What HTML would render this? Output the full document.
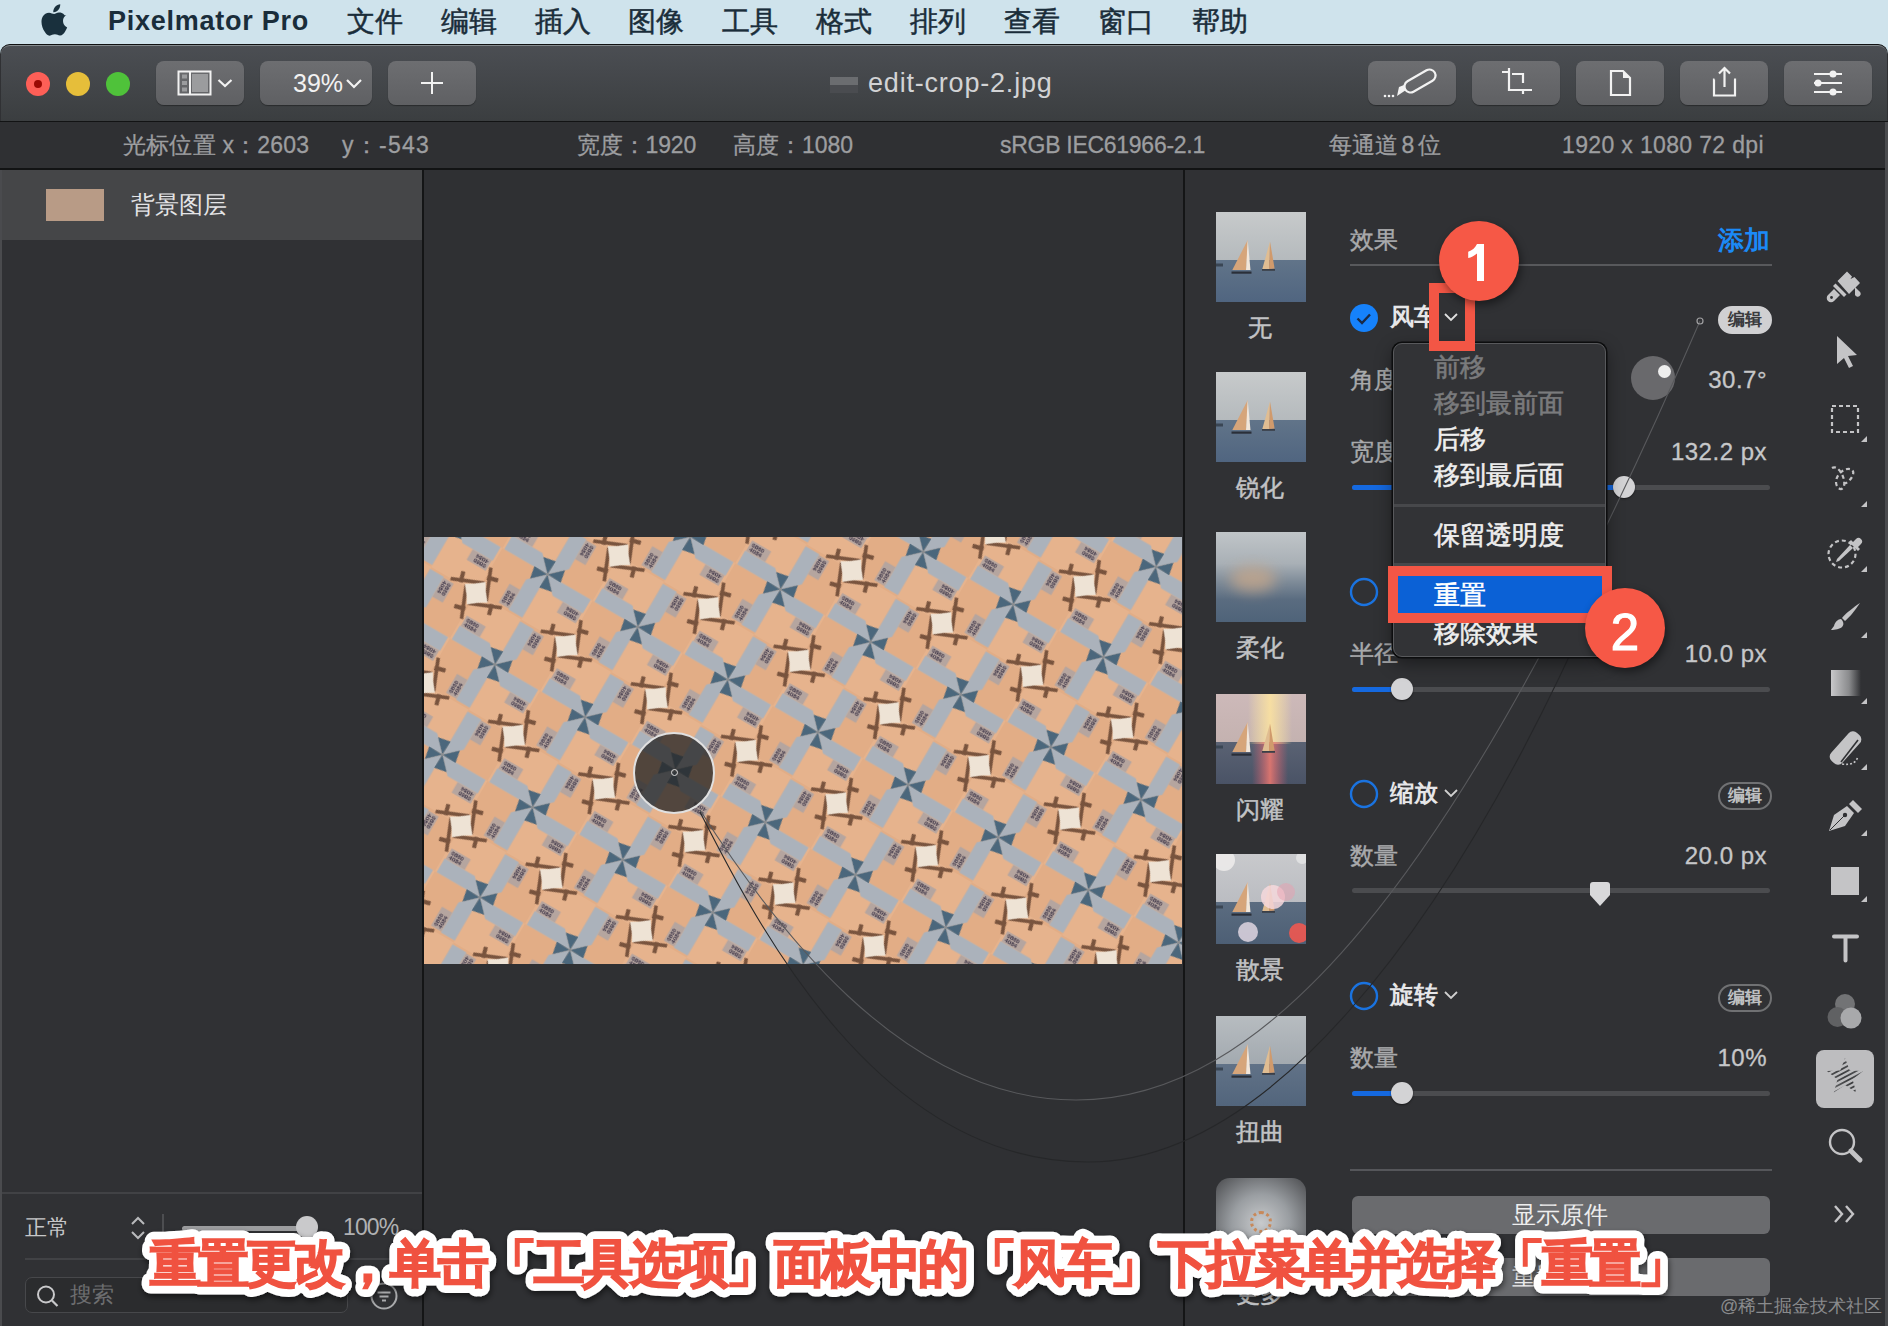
<!DOCTYPE html>
<html><head><meta charset="utf-8">
<style>
*{box-sizing:border-box;margin:0;padding:0}
html,body{width:1888px;height:1326px;overflow:hidden;background:#cfe3ec;font-family:"Liberation Sans",sans-serif}
.a{position:absolute}
.t{position:absolute;white-space:nowrap;line-height:1}
#menubar{left:0;top:0;width:1888px;height:44px;background:#cfe3ec}
#menubar .t{color:#1a2d3a;font-size:28px;top:8px;-webkit-text-stroke:0.5px #1a2d3a}
.btn{position:absolute;top:61px;height:44px;border-radius:8px;background:linear-gradient(#6d6e71,#5f6063);box-shadow:0 1px 1px rgba(0,0,0,.35)}
.info{color:#9d9ea0;font-size:23px;top:134px;-webkit-text-stroke:0.3px #9d9ea0;letter-spacing:0.6px}
.lbl{color:#a9aaac;font-size:24px;-webkit-text-stroke:0.4px #a9aaac}
.val{color:#c6c7c9;font-size:24px;-webkit-text-stroke:0.3px #c6c7c9;letter-spacing:0.5px}
.thumb{position:absolute;left:1216px;width:90px;height:90px;overflow:hidden}
.tl{position:absolute;left:1226px;width:68px;text-align:center;color:#c2c3c5;-webkit-text-stroke:0.5px #c2c3c5;font-size:24px;line-height:1;white-space:nowrap}
.track{position:absolute;height:5px;border-radius:3px;background:#4b4c4f}
.knob{position:absolute;width:22px;height:22px;border-radius:50%;background:#d3d3d5;box-shadow:0 1px 2px rgba(0,0,0,.5)}
.pill{position:absolute;left:1718px;width:54px;height:28px;border-radius:14px;border:2px solid #707173;color:#bfc0c2;font-size:17px;font-weight:bold;text-align:center;line-height:24px}
.tool{position:absolute;left:1822px;width:46px;height:46px}
.mi{position:absolute;left:1434px;font-size:26px;line-height:1;white-space:nowrap;color:#eeeeee;-webkit-text-stroke:0.6px currentColor}
</style></head><body>
<!-- MENUBAR -->
<div id="menubar" class="a">
  <svg class="a" style="left:41px;top:4px" width="28" height="32" viewBox="0 0 30 34"><path fill="#19303d" d="M20.6 0c.2 2.2-.6 4.400-1.900 6-1.300 1.600-3.400 2.800-5.500 2.600-.3-2.100.8-4.400 2-5.800C16.600 1.200 18.800.1 20.600 0zM27.300 11.600c-.2.1-3.700 2.100-3.700 6.400 0 5 4.400 6.700 4.400 6.800 0 .1-.7 2.400-2.300 4.800-1.400 2-2.900 4.100-5.200 4.100-2.300.1-3-1.300-5.600-1.300-2.600 0-3.400 1.300-5.600 1.400-2.200.1-3.900-2.200-5.300-4.200C1.100 25.500-1 18.200 1.900 13.200c1.400-2.500 4-4 6.700-4.100 2.100 0 4.100 1.400 5.400 1.400 1.300 0 3.400-1.800 5.800-1.500 1 0 3.800.4 5.500 3z"/></svg>
  <div class="t" style="left:108px;font-weight:bold;font-size:27px;top:8px;letter-spacing:0.75px;-webkit-text-stroke:0">Pixelmator Pro</div>
  <div class="t" style="left:347px">文件</div>
  <div class="t" style="left:441px">编辑</div>
  <div class="t" style="left:535px">插入</div>
  <div class="t" style="left:628px">图像</div>
  <div class="t" style="left:722px">工具</div>
  <div class="t" style="left:816px">格式</div>
  <div class="t" style="left:910px">排列</div>
  <div class="t" style="left:1004px">查看</div>
  <div class="t" style="left:1098px">窗口</div>
  <div class="t" style="left:1192px">帮助</div>
</div>
<!-- WINDOW BG -->
<div class="a" style="left:0;top:44px;width:1888px;height:1282px;background:#303134;border-radius:10px 10px 0 0;border-top:1px solid #101112"></div>
<!-- TOOLBAR -->
<div class="a" style="left:1px;top:45px;width:1886px;height:76px;background:linear-gradient(#4b4e53,#3b3e40);border-radius:9px 9px 0 0;border-top:1.5px solid #858b8e"></div>
<div class="a" style="left:0;top:121px;width:1888px;height:1px;background:#121314"></div>
<div class="a" style="left:26px;top:72px;width:24px;height:24px;border-radius:50%;background:#fd5f57"></div>
<div class="a" style="left:34px;top:80px;width:8px;height:8px;border-radius:50%;background:#9a0a04"></div>
<div class="a" style="left:66px;top:72px;width:24px;height:24px;border-radius:50%;background:#e6be3a"></div>
<div class="a" style="left:106px;top:72px;width:24px;height:24px;border-radius:50%;background:#4fc23a"></div>
<div class="btn" style="left:156px;width:88px"></div>
<div class="btn" style="left:260px;width:112px"></div>
<div class="btn" style="left:388px;width:88px"></div>
<div class="btn" style="left:1368px;width:88px"></div>
<div class="btn" style="left:1472px;width:88px"></div>
<div class="btn" style="left:1576px;width:88px"></div>
<div class="btn" style="left:1680px;width:88px"></div>
<div class="btn" style="left:1784px;width:88px"></div>
<!-- toolbar icons -->
<svg class="a" style="left:156px;top:61px" width="88" height="44" viewBox="0 0 88 44">
  <rect x="22.5" y="10.5" width="32" height="23" fill="none" stroke="#f2f2f2" stroke-width="2"/>
  <line x1="34" y1="10" x2="34" y2="34" stroke="#f2f2f2" stroke-width="2"/>
  <rect x="36" y="13" width="16" height="18" fill="#9b9c9e"/>
  <rect x="26" y="13.5" width="5" height="4" fill="#9b9c9e"/><rect x="26" y="20" width="5" height="4" fill="#9b9c9e"/><rect x="26" y="26.5" width="5" height="4" fill="#9b9c9e"/>
  <polyline points="62.5,19 69,25 75.5,19" fill="none" stroke="#f2f2f2" stroke-width="2.2"/>
</svg>
<div class="t" style="left:293px;top:71px;font-size:25px;color:#f2f2f2">39%</div>
<svg class="a" style="left:340px;top:61px" width="30" height="44"><polyline points="7,19 14,26 21,19" fill="none" stroke="#f2f2f2" stroke-width="2.2"/></svg>
<svg class="a" style="left:388px;top:61px" width="88" height="44"><path d="M44 11v22M33 22h22" stroke="#f2f2f2" stroke-width="2"/></svg>
<svg class="a" style="left:1368px;top:61px" width="88" height="44">
  <circle cx="17" cy="35" r="1.3" fill="#f2f2f2"/><circle cx="21" cy="35" r="1.3" fill="#f2f2f2"/><circle cx="25" cy="35" r="1.3" fill="#f2f2f2"/>
  <path d="M29 35 L31 26 L36 24 L38 29 Z" fill="#f2f2f2"/>
  <rect x="35" y="14" width="34" height="12" rx="6" transform="rotate(-30 52 20)" fill="none" stroke="#f2f2f2" stroke-width="2.2"/>
</svg>
<svg class="a" style="left:1472px;top:61px" width="88" height="44">
  <path d="M30 11h7M37 7v22h23M51 22V13H40M51 33v-4" fill="none" stroke="#f2f2f2" stroke-width="2.2"/>
</svg>
<svg class="a" style="left:1576px;top:61px" width="88" height="44">
  <path d="M35 10h12l7 7v17H35z" fill="none" stroke="#f2f2f2" stroke-width="2.2"/><path d="M47 10v7h7z" fill="#f2f2f2"/>
</svg>
<svg class="a" style="left:1680px;top:61px" width="88" height="44">
  <path d="M34.500 18.500h-0.5v16h21v-16h-1" fill="none" stroke="#f2f2f2" stroke-width="2.2"/>
  <path d="M44.500 26V7M39 12.500l5.500-5.500 5.500 5.500" fill="none" stroke="#f2f2f2" stroke-width="2.2"/>
</svg>
<svg class="a" style="left:1784px;top:61px" width="88" height="44">
  <path d="M30 13h28M30 22h28M30 31h28" stroke="#f2f2f2" stroke-width="2"/>
  <circle cx="49" cy="13" r="3.500" fill="#f2f2f2"/><circle cx="34" cy="22" r="3.500" fill="#f2f2f2"/><circle cx="49" cy="31" r="3.500" fill="#f2f2f2"/>
</svg>
<!-- title -->
<svg class="a" style="left:829px;top:76px" width="30" height="18"><rect x="1" y="1" width="28" height="16" fill="#6b6d70"/><rect x="1" y="9" width="28" height="8" fill="#4a4c50"/></svg>
<div class="t" style="left:868px;top:70px;font-size:27px;color:#d2d3d5;letter-spacing:0.8px">edit-crop-2.jpg</div>
<!-- INFOBAR -->
<div class="a" style="left:0;top:122px;width:1888px;height:47px;background:#2f3033"></div>
<div class="a" style="left:0;top:168px;width:1888px;height:2px;background:#121314"></div>
<div class="t info" style="left:123px;letter-spacing:0.2px">光标位置 x：2603</div>
<div class="t info" style="left:342px;letter-spacing:1.25px">y：-543</div>
<div class="t info" style="left:577px;letter-spacing:-0.15px">宽度：1920</div>
<div class="t info" style="left:733px;letter-spacing:0px">高度：1080</div>
<div class="t info" style="left:1000px;letter-spacing:-0.28px">sRGB IEC61966-2.1</div>
<div class="t info" style="left:1329px;letter-spacing:0px">每通道<span style="letter-spacing:-3px"> </span>8<span style="letter-spacing:-3px"> </span>位</div>
<div class="t info" style="left:1562px;letter-spacing:0.35px">1920 x 1080 72 dpi</div>

<!-- LEFT PANEL -->
<div class="a" style="left:0;top:170px;width:422px;height:1156px;background:#303134"></div>
<div class="a" style="left:0;top:170px;width:2px;height:1156px;background:#4a4b4e"></div>
<div class="a" style="left:2px;top:170px;width:420px;height:70px;background:#454648"></div>
<div class="a" style="left:46px;top:189px;width:58px;height:32px;background:#b89b86"></div>
<div class="t" style="left:131px;top:193px;font-size:24px;color:#e4e4e6">背景图层</div>
<div class="a" style="left:422px;top:170px;width:2px;height:1156px;background:#141516"></div>
<div class="a" style="left:2px;top:1192px;width:420px;height:2px;background:#414245"></div>
<div class="t" style="left:25px;top:1217px;font-size:22px;color:#c6c7c9">正常</div>
<svg class="a" style="left:128px;top:1214px" width="20" height="28"><path d="M4 10l6-6 6 6M4 18l6 6 6-6" fill="none" stroke="#b9babc" stroke-width="2"/></svg>
<div class="a" style="left:162px;top:1214px;width:2px;height:26px;background:#4d4e51"></div>
<div class="a" style="left:182px;top:1226px;width:120px;height:5px;border-radius:3px;background:#9c9d9f"></div>
<div class="a" style="left:296px;top:1216px;width:22px;height:22px;border-radius:50%;background:#c9c9cb"></div>
<div class="t" style="left:343px;top:1216px;font-size:23px;color:#b0b1b3;letter-spacing:-0.9px">100%</div>
<div class="a" style="left:25px;top:1258px;width:397px;height:2px;background:#414245"></div>
<div class="a" style="left:25px;top:1277px;width:323px;height:36px;border-radius:7px;background:#2b2c2e;border:1.5px solid #47484b"></div>
<svg class="a" style="left:34px;top:1283px" width="28" height="28"><circle cx="12" cy="11.5" r="8" fill="none" stroke="#c9c9cb" stroke-width="2"/><path d="M18 17.500l5.500 5.500" stroke="#c9c9cb" stroke-width="2.2"/></svg>
<div class="t" style="left:70px;top:1284px;font-size:22px;color:#6d6e70">搜索</div>
<svg class="a" style="left:368px;top:1280px" width="32" height="32"><circle cx="16" cy="16" r="12.500" fill="none" stroke="#a9aaac" stroke-width="2"/><path d="M9.500 12.500h13M11.500 16.500h9M14 20.500h4" stroke="#a9aaac" stroke-width="2"/></svg>

<!-- CANVAS -->
<div class="a" style="left:424px;top:170px;width:759px;height:1156px;background:#2f3033"></div>
<div class="a" id="img" style="left:424px;top:537px;width:758px;height:427px;overflow:hidden;background:#e6b58e"><div style="filter:blur(0.7px)">
<svg width="758" height="427" viewBox="0 0 758 427">
 <defs>
  <pattern id="pw" patternUnits="userSpaceOnUse" width="104.35" height="104.35" patternTransform="translate(52.2 56.2) rotate(30.26)">
   <rect width="104.35" height="104.35" fill="#e2ad86"/>
   <rect x="0" y="0" width="52.175" height="52.175" fill="#e6b38d"/>
   <rect x="52.175" y="52.175" width="52.175" height="52.175" fill="#e6b38d"/>
   <path d="M3.17 24.17 L25.17 24.17 L25.17 36.17 L3.17 36.17ZM80.17 3.17 L80.17 25.17 L68.17 25.17 L68.17 3.17ZM101.17 80.17 L79.17 80.17 L79.17 68.17 L101.17 68.17ZM24.17 101.17 L24.17 79.17 L36.17 79.17 L36.17 101.17Z" fill="#b5a59f"/>
   <path d="M2.17 36.17 L36.97 36.17 L52.17 52.17 L2.17 52.17ZM68.17 2.17 L68.17 36.97 L52.17 52.17 L52.17 2.17ZM102.17 68.17 L67.38 68.17 L52.17 52.17 L102.17 52.17ZM36.17 102.17 L36.17 67.38 L52.17 52.17 L52.17 102.17Z" fill="#abb2bb"/>
   <path d="M52.17 52.17 L39.67 39.17 L52.67 36.67ZM52.17 52.17 L65.17 39.67 L67.67 52.67ZM52.17 52.17 L64.67 65.17 L51.67 67.67ZM52.17 52.17 L39.17 64.67 L36.67 51.67Z" fill="#4b677c"/>
   <path d="M-30.00 -1.50 L1.60 -14.50 L2.60 -11.00 L-29.00 2.00ZM-24.00 -12.00 L-20.00 -13.00 L-17.00 -2.00 L-21.00 -1.00ZM1.50 -30.00 L14.50 1.60 L11.00 2.60 L-2.00 -29.00ZM12.00 -24.00 L13.00 -20.00 L2.00 -17.00 L1.00 -21.00ZM30.00 1.50 L-1.60 14.50 L-2.60 11.00 L29.00 -2.00ZM24.00 12.00 L20.00 13.00 L17.00 2.00 L21.00 1.00ZM-1.50 30.00 L-14.50 -1.60 L-11.00 -2.60 L2.00 29.00ZM-12.00 24.00 L-13.00 20.00 L-2.00 17.00 L-1.00 21.00ZM-30.00 102.85 L1.60 89.85 L2.60 93.35 L-29.00 106.35ZM-24.00 92.35 L-20.00 91.35 L-17.00 102.35 L-21.00 103.35ZM1.50 74.35 L14.50 105.95 L11.00 106.95 L-2.00 75.35ZM12.00 80.35 L13.00 84.35 L2.00 87.35 L1.00 83.35ZM30.00 105.85 L-1.60 118.85 L-2.60 115.35 L29.00 102.35ZM24.00 116.35 L20.00 117.35 L17.00 106.35 L21.00 105.35ZM-1.50 134.35 L-14.50 102.75 L-11.00 101.75 L2.00 133.35ZM-12.00 128.35 L-13.00 124.35 L-2.00 121.35 L-1.00 125.35ZM74.35 -1.50 L105.95 -14.50 L106.95 -11.00 L75.35 2.00ZM80.35 -12.00 L84.35 -13.00 L87.35 -2.00 L83.35 -1.00ZM105.85 -30.00 L118.85 1.60 L115.35 2.60 L102.35 -29.00ZM116.35 -24.00 L117.35 -20.00 L106.35 -17.00 L105.35 -21.00ZM134.35 1.50 L102.75 14.50 L101.75 11.00 L133.35 -2.00ZM128.35 12.00 L124.35 13.00 L121.35 2.00 L125.35 1.00ZM102.85 30.00 L89.85 -1.60 L93.35 -2.60 L106.35 29.00ZM92.35 24.00 L91.35 20.00 L102.35 17.00 L103.35 21.00ZM74.35 102.85 L105.95 89.85 L106.95 93.35 L75.35 106.35ZM80.35 92.35 L84.35 91.35 L87.35 102.35 L83.35 103.35ZM105.85 74.35 L118.85 105.95 L115.35 106.95 L102.35 75.35ZM116.35 80.35 L117.35 84.35 L106.35 87.35 L105.35 83.35ZM134.35 105.85 L102.75 118.85 L101.75 115.35 L133.35 102.35ZM128.35 116.35 L124.35 117.35 L121.35 106.35 L125.35 105.35ZM102.85 134.35 L89.85 102.75 L93.35 101.75 L106.35 133.35ZM92.35 128.35 L91.35 124.35 L102.35 121.35 L103.35 125.35Z" fill="#5e3c2a" opacity=".8"/>
   <path d="M14.50 2.50 L7.00 7.00 L-2.50 14.50 L-7.00 7.00 L-14.50 -2.50 L-7.00 -7.00 L2.50 -14.50 L7.00 -7.00ZM14.50 106.85 L7.00 111.35 L-2.50 118.85 L-7.00 111.35 L-14.50 101.85 L-7.00 97.35 L2.50 89.85 L7.00 97.35ZM118.85 2.50 L111.35 7.00 L101.85 14.50 L97.35 7.00 L89.85 -2.50 L97.35 -7.00 L106.85 -14.50 L111.35 -7.00ZM118.85 106.85 L111.35 111.35 L101.85 118.85 L97.35 111.35 L89.85 101.85 L97.35 97.35 L106.85 89.85 L111.35 97.35Z" fill="#eee3d5"/>
   <g transform="translate(52.175 52.175) rotate(0)"><text x="-47" y="-22.5" font-family="Liberation Sans" font-size="6.200" font-weight="bold" fill="#3b3346">0860</text><text x="-47" y="-17" font-family="Liberation Sans" font-size="6.200" font-weight="bold" fill="#3b3346">4084</text></g><g transform="translate(52.175 52.175) rotate(90)"><text x="-47" y="-22.5" font-family="Liberation Sans" font-size="6.200" font-weight="bold" fill="#3b3346">0860</text><text x="-47" y="-17" font-family="Liberation Sans" font-size="6.200" font-weight="bold" fill="#3b3346">4084</text></g><g transform="translate(52.175 52.175) rotate(180)"><text x="-47" y="-22.5" font-family="Liberation Sans" font-size="6.200" font-weight="bold" fill="#3b3346">0860</text><text x="-47" y="-17" font-family="Liberation Sans" font-size="6.200" font-weight="bold" fill="#3b3346">4084</text></g><g transform="translate(52.175 52.175) rotate(270)"><text x="-47" y="-22.5" font-family="Liberation Sans" font-size="6.200" font-weight="bold" fill="#3b3346">0860</text><text x="-47" y="-17" font-family="Liberation Sans" font-size="6.200" font-weight="bold" fill="#3b3346">4084</text></g>
  </pattern>
 </defs>
 <rect width="758" height="427" fill="url(#pw)"/>
</svg></div>
</div>
<!-- canvas control circle -->
<div class="a" style="left:633px;top:732px;width:82px;height:82px;border-radius:50%;background:rgba(40,40,40,.78);border:2px solid #e0e0e0"></div>
<div class="a" style="left:671px;top:769px;width:7px;height:7px;border-radius:50%;border:1.5px solid #ddd"></div>


<!-- RIGHT PANEL -->
<div class="a" style="left:1183px;top:170px;width:2px;height:1156px;background:#141516"></div>
<div class="a" style="left:1185px;top:170px;width:700px;height:1156px;background:#303134"></div>
<div class="a" style="left:1885px;top:122px;width:3px;height:1204px;background:#4a4b4e"></div>
<div class="thumb" style="top:212px;"><svg width="90" height="90" viewBox="0 0 90 90"><defs><linearGradient id="ka" x1="0" x2="0" y1="0" y2="1"><stop offset="0" stop-color="#c7cacb"/><stop offset=".53" stop-color="#b5babd"/><stop offset=".535" stop-color="#617489"/><stop offset="1" stop-color="#506580"/></linearGradient></defs><rect width="90" height="90" fill="url(#ka)"/><path d="M0 51.5 h7 v3 h-7z" fill="#3a4654"/>
<path d="M31.7 28 L16.3 58 L30.500 58Z" fill="#d6a57a"/><path d="M31.700 28 L30 58 L34.500 58Z" fill="#f1e6da"/>
<path d="M15.500 59.500 h20 v2.200 h-20z" fill="#2a2f38"/>
<path d="M54 29.500 L46.300 57 L53 57Z" fill="#e0bd92"/><path d="M54 29.500 L53 57 L58.600 56.500Z" fill="#d09a6c"/>
<path d="M46 57 h13 v1.800 h-13z" fill="#3a3f48"/></svg></div>
<div class="thumb" style="top:372px;"><svg width="90" height="90" viewBox="0 0 90 90"><defs><linearGradient id="kb" x1="0" x2="0" y1="0" y2="1"><stop offset="0" stop-color="#c7cacb"/><stop offset=".53" stop-color="#b5babd"/><stop offset=".535" stop-color="#617489"/><stop offset="1" stop-color="#506580"/></linearGradient></defs><rect width="90" height="90" fill="url(#kb)"/><path d="M0 51.5 h7 v3 h-7z" fill="#3a4654"/>
<path d="M31.7 28 L16.3 58 L30.500 58Z" fill="#d6a57a"/><path d="M31.700 28 L30 58 L34.500 58Z" fill="#f1e6da"/>
<path d="M15.500 59.500 h20 v2.200 h-20z" fill="#2a2f38"/>
<path d="M54 29.500 L46.300 57 L53 57Z" fill="#e0bd92"/><path d="M54 29.500 L53 57 L58.600 56.500Z" fill="#d09a6c"/>
<path d="M46 57 h13 v1.800 h-13z" fill="#3a3f48"/></svg></div>
<div class="thumb" style="top:532px;background:linear-gradient(#c0c5c8 0%,#a9b0b6 35%,#7f8c99 55%,#5a6c80 75%,#4f6379 100%)"><div class="a" style="left:14px;top:34px;width:46px;height:26px;border-radius:50%;background:#c7a78a;filter:blur(7px);opacity:.75"></div></div>
<div class="thumb" style="top:694px;"><svg width="90" height="90" viewBox="0 0 90 90"><defs><linearGradient id="ksh" x1="0" x2="0" y1="0" y2="1"><stop offset="0" stop-color="#cdb9b9"/><stop offset=".53" stop-color="#c4b2b0"/><stop offset=".535" stop-color="#5a6273"/><stop offset="1" stop-color="#4a5366"/></linearGradient>
<linearGradient id="beam" x1="0" x2="1"><stop offset="0" stop-color="#ffe9a0" stop-opacity="0"/><stop offset=".5" stop-color="#fbe2a0" stop-opacity=".9"/><stop offset="1" stop-color="#ffe9a0" stop-opacity="0"/></linearGradient>
<linearGradient id="refl" x1="0" x2="1"><stop offset="0" stop-color="#e05a70" stop-opacity="0"/><stop offset=".5" stop-color="#f07a70" stop-opacity=".85"/><stop offset="1" stop-color="#e05a70" stop-opacity="0"/></linearGradient></defs>
<rect width="90" height="90" fill="url(#ksh)"/><rect x="32" y="0" width="44" height="50" fill="url(#beam)"/><rect x="36" y="48" width="36" height="42" fill="url(#refl)"/><path d="M0 51.5 h7 v3 h-7z" fill="#3a4654"/>
<path d="M31.7 28 L16.3 58 L30.500 58Z" fill="#d6a57a"/><path d="M31.700 28 L30 58 L34.500 58Z" fill="#f1e6da"/>
<path d="M15.500 59.500 h20 v2.200 h-20z" fill="#2a2f38"/>
<path d="M54 29.500 L46.300 57 L53 57Z" fill="#e0bd92"/><path d="M54 29.500 L53 57 L58.600 56.500Z" fill="#d09a6c"/>
<path d="M46 57 h13 v1.800 h-13z" fill="#3a3f48"/></svg></div>
<div class="thumb" style="top:854px;"><svg width="90" height="90" viewBox="0 0 90 90"><defs><linearGradient id="kbk" x1="0" x2="0" y1="0" y2="1"><stop offset="0" stop-color="#c8c9cc"/><stop offset=".53" stop-color="#bbbdc2"/><stop offset=".535" stop-color="#5b6c80"/><stop offset="1" stop-color="#4d5f75"/></linearGradient></defs><rect width="90" height="90" fill="url(#kbk)"/><path d="M0 51.5 h7 v3 h-7z" fill="#3a4654"/>
<path d="M31.7 28 L16.3 58 L30.500 58Z" fill="#d6a57a"/><path d="M31.700 28 L30 58 L34.500 58Z" fill="#f1e6da"/>
<path d="M15.500 59.500 h20 v2.200 h-20z" fill="#2a2f38"/>
<path d="M54 29.500 L46.300 57 L53 57Z" fill="#e0bd92"/><path d="M54 29.500 L53 57 L58.600 56.500Z" fill="#d09a6c"/>
<path d="M46 57 h13 v1.800 h-13z" fill="#3a3f48"/><circle cx="8" cy="6" r="11" fill="#f4f1f0" opacity=".75"/><circle cx="57" cy="43" r="12" fill="#f6d8dc" opacity=".85"/><circle cx="70" cy="38" r="9" fill="#e8a0b0" opacity=".5"/><circle cx="32" cy="78" r="10" fill="#e8dde8" opacity=".8"/><circle cx="83" cy="79" r="10" fill="#f05850" opacity=".9"/><circle cx="86" cy="4" r="6" fill="#f0f0f0" opacity=".6"/></svg></div>
<div class="thumb" style="top:1016px;filter:blur(0.6px)"><svg width="90" height="90" viewBox="0 0 90 90"><defs><linearGradient id="ktw" x1="0" x2="0" y1="0" y2="1"><stop offset="0" stop-color="#b7bcc0"/><stop offset=".53" stop-color="#a3aab0"/><stop offset=".535" stop-color="#617287"/><stop offset="1" stop-color="#52657c"/></linearGradient></defs><rect width="90" height="90" fill="url(#ktw)"/><path d="M0 51.5 h7 v3 h-7z" fill="#3a4654"/>
<path d="M31.7 28 L16.3 58 L30.500 58Z" fill="#d6a57a"/><path d="M31.700 28 L30 58 L34.500 58Z" fill="#f1e6da"/>
<path d="M15.500 59.500 h20 v2.200 h-20z" fill="#2a2f38"/>
<path d="M54 29.500 L46.300 57 L53 57Z" fill="#e0bd92"/><path d="M54 29.500 L53 57 L58.600 56.500Z" fill="#d09a6c"/>
<path d="M46 57 h13 v1.800 h-13z" fill="#3a3f48"/></svg></div>
<div class="thumb" style="top:1178px;border-radius:14px;background:radial-gradient(circle at 50% 50%,#c8cacc 0%,#9a9ea2 45%,#4a4b4e 100%)"><div class="a" style="left:34px;top:33px;width:22px;height:22px;border-radius:50%;border:3.5px dotted #c8895a"></div></div>
<div class="tl" style="top:316px">无</div>
<div class="tl" style="top:476px">锐化</div>
<div class="tl" style="top:636px">柔化</div>
<div class="tl" style="top:798px">闪耀</div>
<div class="tl" style="top:958px">散景</div>
<div class="tl" style="top:1120px">扭曲</div>
<div class="tl" style="top:1282px">更多</div>
<!-- effects -->
<div class="t lbl" style="left:1350px;top:228px">效果</div>
<div class="t" style="left:1718px;top:227px;font-size:26px;color:#1b8af7;font-weight:bold">添加</div>
<div class="a" style="left:1350px;top:264px;width:422px;height:2px;background:#58595c"></div>

<svg class="a" style="left:1348px;top:302px" width="32" height="32"><circle cx="16" cy="16" r="14" fill="#1682fb"/><path d="M9.500 16.500l4.500 4.500 8-8.500" fill="none" stroke="#1a2a45" stroke-width="2.400"/></svg>
<div class="t" style="left:1390px;top:305px;font-size:24px;color:#e6e6e8;font-weight:bold">风车</div>
<svg class="a" style="left:1443px;top:311px" width="16" height="12"><path d="M2 3l6 6 6-6" fill="none" stroke="#e0e0e0" stroke-width="1.800"/></svg>
<div class="pill" style="top:306px;background:#d0d0d2;border-color:#d0d0d2;color:#3a3b3e">编辑</div>
<div class="t lbl" style="left:1350px;top:368px">角度</div>
<div class="a" style="left:1631px;top:356px;width:44px;height:44px;border-radius:50%;background:#69696c"></div>
<div class="a" style="left:1658px;top:365px;width:13px;height:13px;border-radius:50%;background:#eeeeee"></div>
<div class="t val" style="right:121px;top:368px">30.7°</div>
<div class="t lbl" style="left:1350px;top:440px">宽度</div>
<div class="t val" style="right:121px;top:440px">132.2 px</div>
<div class="track" style="left:1352px;top:485px;width:418px"></div>
<div class="a" style="left:1352px;top:485px;width:272px;height:5px;border-radius:3px;background:#1569e0"></div>
<div class="knob" style="left:1613px;top:476px"></div>

<svg class="a" style="left:1348px;top:576px" width="32" height="32"><circle cx="16" cy="16" r="13" fill="none" stroke="#1a73e0" stroke-width="2.400"/></svg>
<div class="t lbl" style="left:1350px;top:642px">半径</div>
<div class="t val" style="right:121px;top:642px">10.0 px</div>
<div class="track" style="left:1352px;top:687px;width:418px"></div>
<div class="a" style="left:1352px;top:687px;width:50px;height:5px;border-radius:3px;background:#1569e0"></div>
<div class="knob" style="left:1391px;top:678px"></div>

<svg class="a" style="left:1348px;top:778px" width="32" height="32"><circle cx="16" cy="16" r="13" fill="none" stroke="#1a73e0" stroke-width="2.400"/></svg>
<div class="t" style="left:1390px;top:781px;font-size:24px;color:#e6e6e8;font-weight:bold">缩放</div>
<svg class="a" style="left:1443px;top:787px" width="16" height="12"><path d="M2 3l6 6 6-6" fill="none" stroke="#d0d0d0" stroke-width="1.800"/></svg>
<div class="pill" style="top:782px">编辑</div>
<div class="t lbl" style="left:1350px;top:844px">数量</div>
<div class="t val" style="right:121px;top:844px">20.0 px</div>
<div class="track" style="left:1352px;top:888px;width:418px"></div>
<svg class="a" style="left:1588px;top:881px" width="24" height="26"><path d="M2 4a3 3 0 0 1 3-3h14a3 3 0 0 1 3 3v10l-10 11-10-11z" fill="#d8d8da"/></svg>

<svg class="a" style="left:1348px;top:980px" width="32" height="32"><circle cx="16" cy="16" r="13" fill="none" stroke="#1a73e0" stroke-width="2.400"/></svg>
<div class="t" style="left:1390px;top:983px;font-size:24px;color:#e6e6e8;font-weight:bold">旋转</div>
<svg class="a" style="left:1443px;top:989px" width="16" height="12"><path d="M2 3l6 6 6-6" fill="none" stroke="#d0d0d0" stroke-width="1.800"/></svg>
<div class="pill" style="top:984px">编辑</div>
<div class="t lbl" style="left:1350px;top:1046px">数量</div>
<div class="t val" style="right:121px;top:1046px">10%</div>
<div class="track" style="left:1352px;top:1091px;width:418px"></div>
<div class="a" style="left:1352px;top:1091px;width:50px;height:5px;border-radius:3px;background:#1569e0"></div>
<div class="knob" style="left:1391px;top:1082px"></div>

<div class="a" style="left:1350px;top:1169px;width:422px;height:2px;background:#55565a"></div>
<div class="a" style="left:1352px;top:1196px;width:418px;height:38px;border-radius:6px;background:#6a6b6e"></div>
<div class="t" style="left:1512px;top:1203px;font-size:24px;color:#eeeeee">显示原件</div>
<div class="a" style="left:1352px;top:1258px;width:418px;height:38px;border-radius:6px;background:#6a6b6e"></div>
<div class="t" style="left:1512px;top:1265px;font-size:24px;color:#eeeeee">重置效果</div>


<!-- TOOL STRIP -->
<svg class="a" style="left:1800px;top:240px" width="88" height="1010" viewBox="1800 240 88 1010">
 <g fill="#c4c4c6" stroke="none">
  <!-- paint style brush -->
  <path d="M1837.500 281 L1847 271.500 L1852 276.500 L1850.500 279 L1854.500 277 L1860 283 L1849 294 Z"/>
  <path d="M1835.500 283.500 L1846.500 294.500 L1844 297 L1833 286Z"/>
  <path d="M1834 289 L1840 295 L1834 301 A4 4 0 0 1 1828 295Z"/><circle cx="1831.500" cy="297.500" r="1.400" fill="#303134"/>
  <path d="M1855 287 L1859 291 A3 3 0 1 1 1855 295Z"/>
  <!-- arrow -->
  <path d="M1837 336v28l7-6 5 10 4-2-5-10 9-1z"/>
  <!-- small corner triangles -->
  <path d="M1867 442l-6 0 6-6z"/><path d="M1867 507l-6 0 6-6z"/><path d="M1867 572l-6 0 6-6z"/><path d="M1867 638l-6 0 6-6z"/><path d="M1867 704l-6 0 6-6z"/><path d="M1867 770l-6 0 6-6z"/><path d="M1867 836l-6 0 6-6z"/><path d="M1867 902l-6 0 6-6z"/>
  <!-- gradient square -->
 </g>
 <g fill="none" stroke="#c4c4c6" stroke-width="2.200" stroke-dasharray="4 3">
  <rect x="1832" y="406" width="26" height="26"/>
  <path d="M1832 468c6-4 14 10 12 18-2 6-8 2-8-4 0-8 10-16 16-12 4 3-2 12-8 14"/>
  <circle cx="1842" cy="554" r="13.500"/>
 </g>
 <g fill="#c4c4c6">
  <path d="M1837 559l13-14 3 3-14 13-3 1z" /><path d="M1849 542l9 9 2-2-2-2 3-3a3.500 3.500 0 0 0-5-5l-3 3-2-2z"/>
  <!-- brush -->
  <path d="M1860 603c-6 4-14 10-18 15l3 3c5-4 11-12 15-18z"/><path d="M1841 619c-3 0-6 3-7 7l-3 4c4 0 9-1 11-3 2-2 2-5-1-8z"/>
  <!-- eraser -->
  <rect x="1838" y="729" width="15" height="38" rx="6" transform="rotate(42 1845.500 748)"/>
  <path d="M1858 740 L1841 762" stroke="#303134" stroke-width="1.600" fill="none"/>
  <path d="M1842 764 Q1856 766 1858 756" stroke="#c4c4c6" stroke-width="1.600" stroke-dasharray="2 2" fill="none"/>
  <!-- pen -->
  <path d="M1829 831 L1834 815 L1847 806 L1854 813 L1845 826 Z"/>
  <path d="M1849 804 L1853 800 L1862 809 L1858 813 Z"/>
  <circle cx="1845" cy="815" r="2.200" fill="#303134"/><path d="M1830 830 L1844 816" stroke="#303134" stroke-width="1"/>
  <!-- square -->
  <rect x="1831" y="867" width="28" height="28"/>
  <!-- T -->
  <path d="M1834 936.500h23M1845.500 936.500v24" stroke="#c4c4c6" stroke-width="4" stroke-linecap="round" fill="none"/>
  <!-- circles -->
  <circle cx="1845" cy="1004" r="10" fill="#727375"/><circle cx="1837.500" cy="1017" r="10" fill="#606163"/><circle cx="1851" cy="1018" r="10.500" fill="#a8a9ab"/>
 </g>
 <defs><linearGradient id="gr" x1="0" x2="1"><stop offset="0" stop-color="#c8c8ca"/><stop offset=".6" stop-color="#8a8b8d"/><stop offset="1" stop-color="#303134"/></linearGradient></defs>
 <rect x="1831" y="670" width="30" height="26" fill="url(#gr)"/>
 <rect x="1816" y="1050" width="58" height="58" rx="8" fill="#bdbdbf"/>
 <defs><clipPath id="stc"><path d="M1845.0 1058.0 L1849.7 1070.5 L1863.1 1071.1 L1852.6 1079.5 L1856.2 1092.4 L1845.0 1085.0 L1833.8 1092.4 L1837.4 1079.5 L1826.9 1071.1 L1840.3 1070.5Z"/></clipPath><linearGradient id="stg" x1="0" y1="1" x2="1" y2="0"><stop offset="0" stop-color="#bdbdbf"/><stop offset=".5" stop-color="#3c3d3f"/><stop offset="1" stop-color="#8a8b8d"/></linearGradient></defs>
 <g clip-path="url(#stc)"><path d="M1806.7 1068.8L1859.7 1040.7M1808.7 1072.5L1861.6 1044.4M1810.6 1076.3L1863.6 1048.1M1812.6 1080.0L1865.6 1051.8M1814.6 1083.7L1867.5 1055.5M1816.5 1087.4L1869.5 1059.2M1818.5 1091.1L1871.5 1062.9M1820.5 1094.8L1873.5 1066.6M1822.5 1098.5L1875.4 1070.3M1824.4 1102.2L1877.4 1074.0M1826.4 1105.9L1879.4 1077.7M1828.4 1109.6L1881.3 1081.5M1830.3 1113.3L1883.3 1085.2" stroke="url(#stg)" stroke-width="1.800" fill="none"/></g>
 <g fill="none" stroke="#c4c4c6" stroke-width="2.400">
  <circle cx="1842" cy="1142" r="12"/><path d="M1851 1151l9 9" stroke-width="5" stroke-linecap="round"/>
  <path d="M1835 1206l7 8-7 8M1846 1206l7 8-7 8"/>
 </g>
</svg>

<!-- CURVES -->
<svg class="a" style="left:0;top:0" width="1888" height="1326">
  <path d="M700 810 C 770 920, 900 1100, 1076 1100 C 1260 1100, 1450 900, 1700 321" fill="none" stroke="#58595c" stroke-width="1.1"/>
  <path d="M700 812 C 760 930, 880 1162, 1088 1162 C 1260 1162, 1440 950, 1595 600" fill="none" stroke="#262729" stroke-width="1.1"/>
  <circle cx="1700" cy="321" r="3" fill="none" stroke="#a0a0a2" stroke-width="1.2"/>
</svg>
<!-- POPUP MENU -->
<div class="a" style="left:1393px;top:343px;width:213px;height:314px;border-radius:9px;background:#323336;border:1.5px solid #58595c;box-shadow:0 0 0 1.5px #0c0d0e,0 6px 18px rgba(0,0,0,.45)"></div>
<div class="mi" style="top:354px;color:#7a7b7d">前移</div>
<div class="mi" style="top:390px;color:#7a7b7d">移到最前面</div>
<div class="mi" style="top:426px">后移</div>
<div class="mi" style="top:462px">移到最后面</div>
<div class="a" style="left:1394px;top:504px;width:211px;height:3px;background:#47484b"></div>
<div class="mi" style="top:522px">保留透明度</div>
<div class="a" style="left:1394px;top:563px;width:211px;height:3px;background:#47484b"></div>
<div class="mi" style="top:620px">移除效果</div>
<div class="a" style="left:1398px;top:576px;width:204px;height:38px;background:#0b61d6"></div>
<div class="mi" style="top:582px;color:#fff">重置</div>
<div class="a" style="left:1388px;top:566px;width:224px;height:57px;border:10px solid #f35645"></div>
<!-- red box 1 -->
<div class="a" style="left:1429px;top:283px;width:46px;height:68px;border:10px solid #f35645"></div>
<!-- badges -->
<div class="a" style="left:1439px;top:221px;width:80px;height:80px;border-radius:50%;background:#f65846;box-shadow:2px 4px 8px rgba(0,0,0,.45)"></div>
<svg class="a" style="left:1460px;top:240px" width="30" height="45"><path d="M17 4h7v37h-7V13.500c-2.500 2.200-5.500 3.800-8.800 4.600v-6.300C12 10.500 15 8 17 4z" fill="#fff"/></svg>
<div class="a" style="left:1585px;top:588px;width:80px;height:80px;border-radius:50%;background:#f65846;box-shadow:2px 4px 8px rgba(0,0,0,.45)"></div>
<div class="t" style="left:1585px;top:607px;width:80px;text-align:center;font-size:51px;color:#fff;-webkit-text-stroke:1.2px #fff">2</div>

<!-- CAPTION -->
<svg class="a" style="left:0;top:1180px" width="1888" height="146">
 <defs><filter id="ds" x="-5%" y="-50%" width="110%" height="200%"><feGaussianBlur in="SourceAlpha" stdDeviation="3"/><feOffset dx="1" dy="3"/><feComponentTransfer><feFuncA type="linear" slope=".55"/></feComponentTransfer><feMerge><feMergeNode/><feMergeNode in="SourceGraphic"/></feMerge></filter></defs>
 <g font-family="Liberation Sans" font-size="51" font-weight="bold" letter-spacing="-3">
  <text x="150" y="101" fill="#fff" stroke="#fff" stroke-width="17" stroke-linejoin="round" filter="url(#ds)">重置更改，单击「工具选项」面板中的「风车」下拉菜单并选择「重置」</text>
  <text x="150" y="101" fill="#f05240" stroke="#f05240" stroke-width="1.600">重置更改，单击「工具选项」面板中的「风车」下拉菜单并选择「重置」</text>
 </g>
</svg>
<div class="t" style="left:1720px;top:1297px;font-size:18px;color:#8a8b8d">@稀土掘金技术社区</div>

</body></html>
